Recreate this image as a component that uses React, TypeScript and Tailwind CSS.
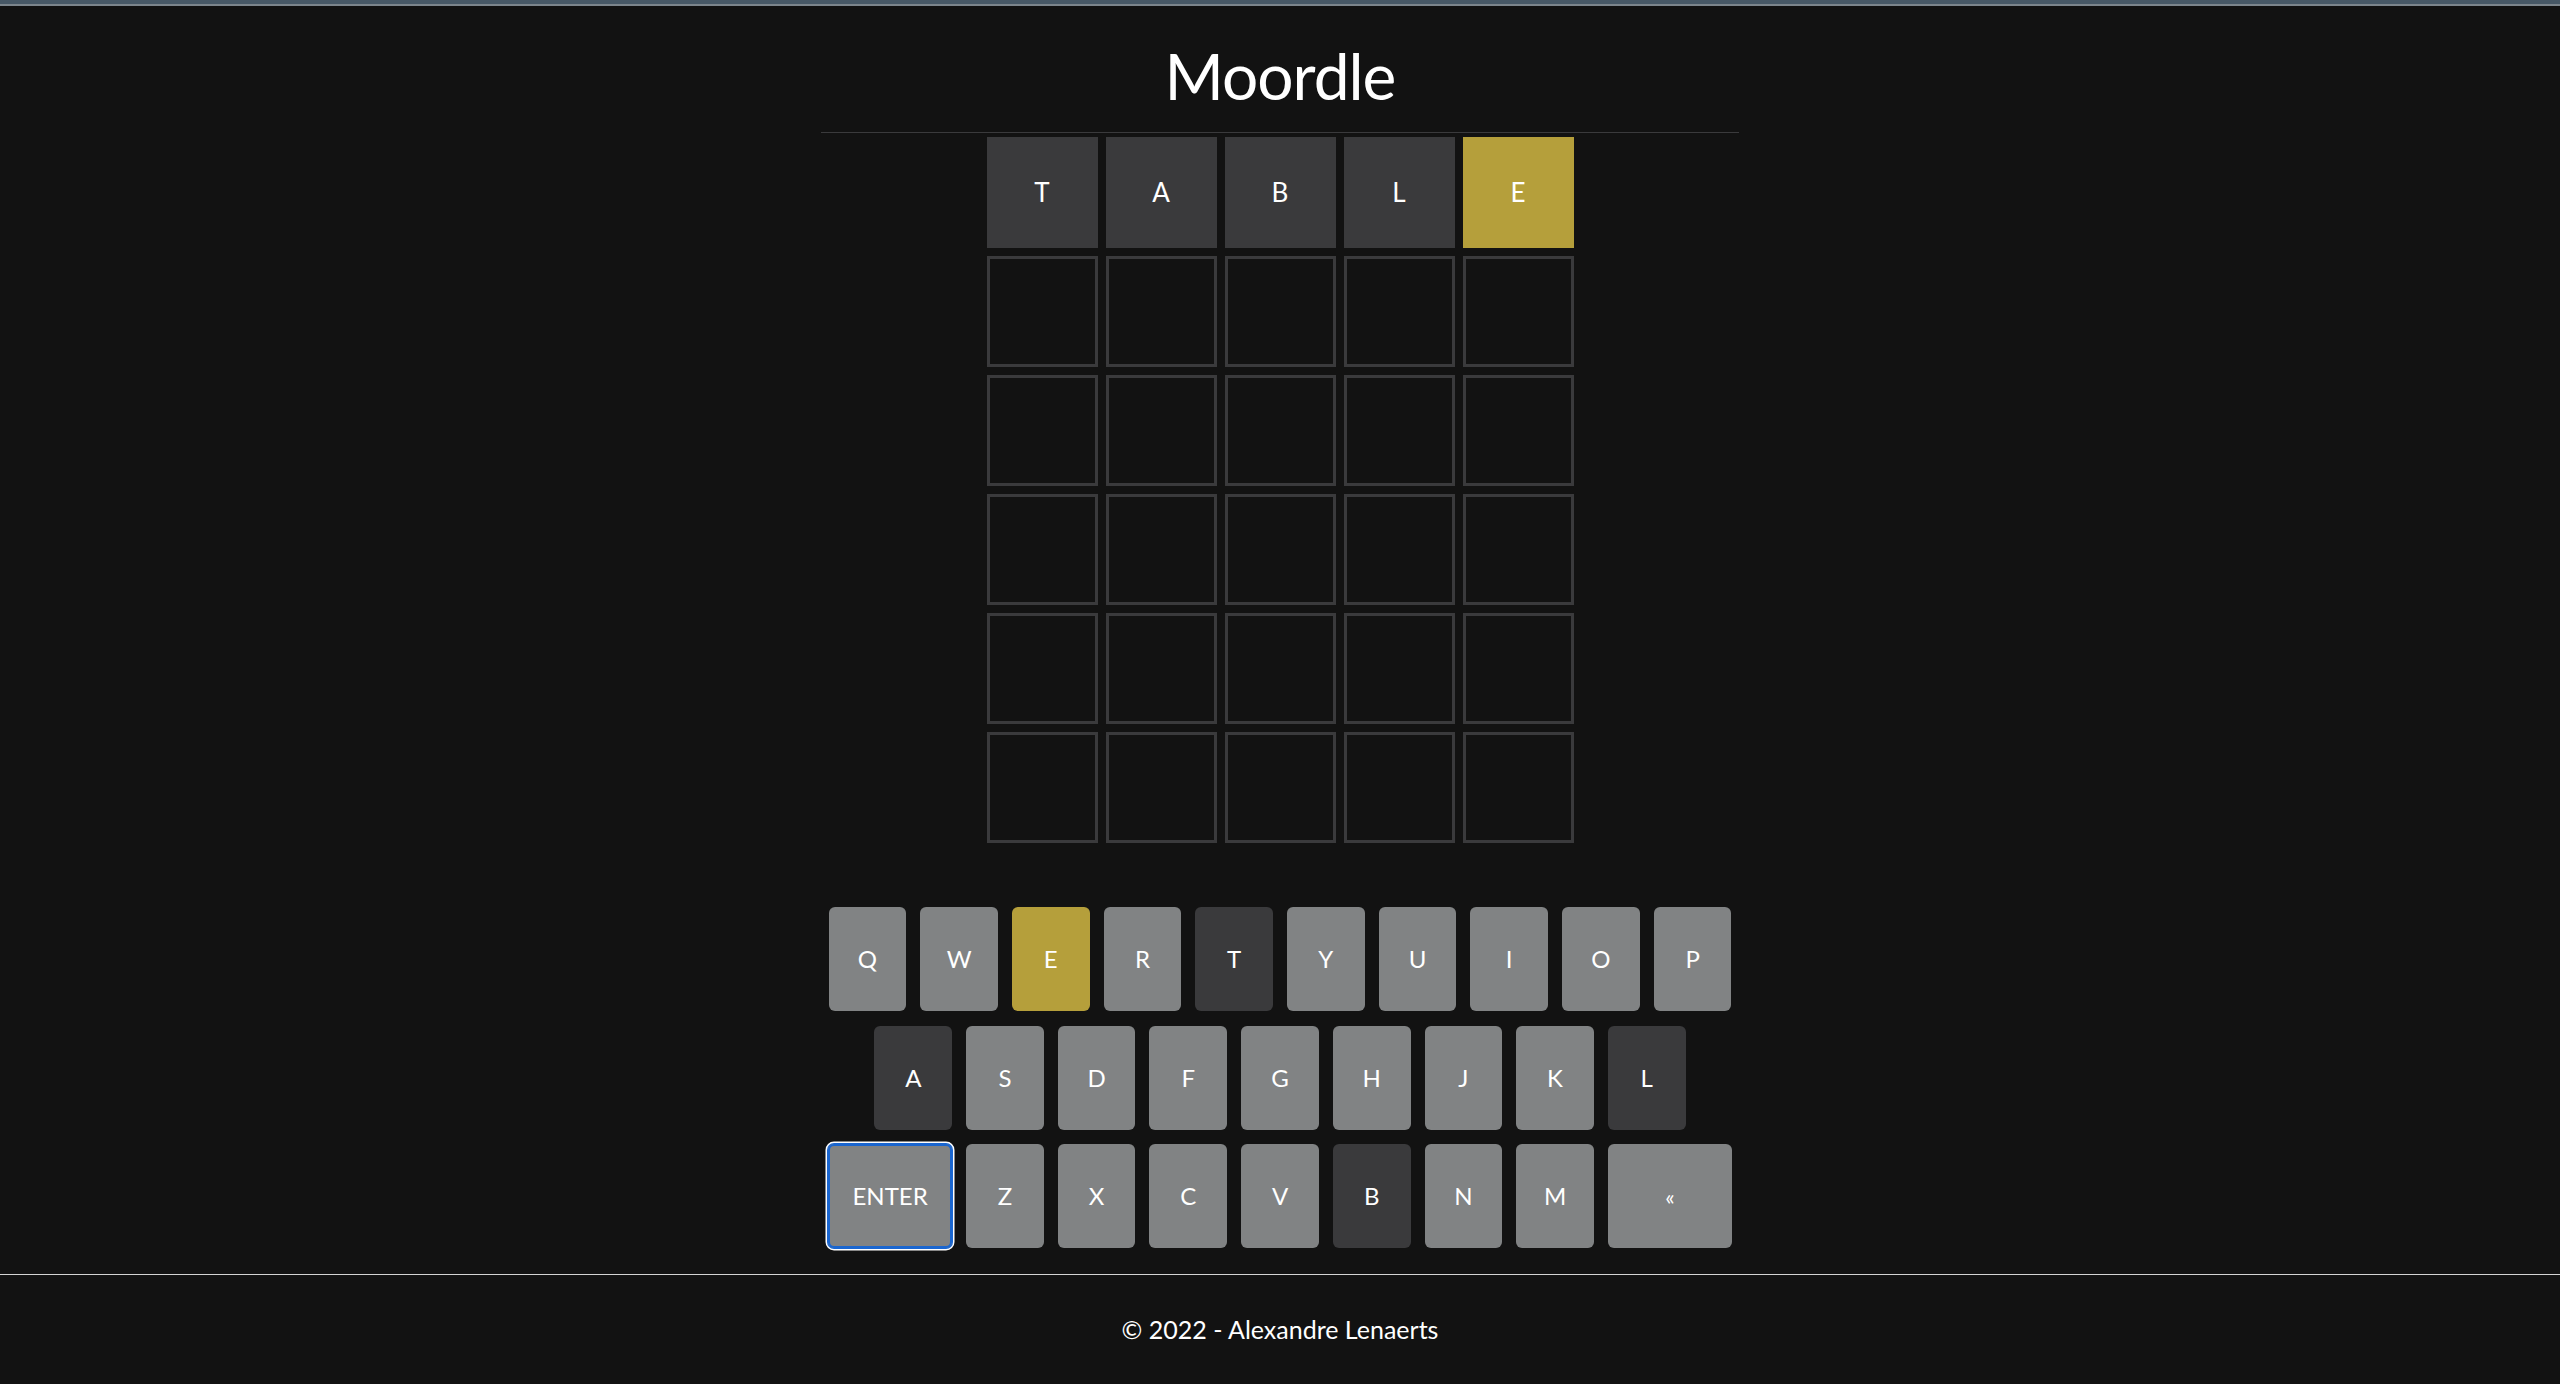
import React from "react";

type State = "absent" | "present" | "correct" | "unused";

const keyStates: Record<string, State> = {
  E: "present",
  T: "absent",
  A: "absent",
  L: "absent",
  B: "absent",
};

const rows = [
  ["Q", "W", "E", "R", "T", "Y", "U", "I", "O", "P"],
  ["A", "S", "D", "F", "G", "H", "J", "K", "L"],
];
const row3 = ["Z", "X", "C", "V", "B", "N", "M"];

function keyColor(k: string) {
  const s = keyStates[k];
  if (s === "present") return "bg-[#b59f3b]";
  if (s === "absent") return "bg-[#3a3a3c]";
  return "bg-[#818384]";
}

function Key({ label }: { label: string }) {
  return (
    <button
      className={`w-[77.7px] h-[104px] rounded-[6px] flex items-center justify-center text-white text-[24px] ${keyColor(label)}`}
    >
      {label}
    </button>
  );
}

export default function App() {
  const guess = ["T", "A", "B", "L", "E"];
  return (
    <div
      className="h-screen flex flex-col bg-[#121212] text-white overflow-hidden"
      style={{ fontFamily: "Lato, 'Noto Sans', sans-serif" }}
    >
      <div className="h-[4px] bg-[#475866]" />
      <div className="h-[2px] bg-[#7c858c]" />
      <main className="flex-1 flex flex-col items-center">
        <header className="w-[918px] pt-[38px] pb-[24px] border-b border-[#3a3a3c] flex justify-center">
          <h1 className="text-[64px] leading-[64px] font-normal tracking-[-1px]">Moordle</h1>
        </header>
        <div className="mt-[4px] flex flex-col gap-[8px]">
          <div className="flex gap-[8px]">
            {guess.map((l, i) => (
              <div
                key={i}
                className={`w-[111px] h-[111px] flex items-center justify-center text-[26px] text-white ${
                  i === 4 ? "bg-[#b59f3b]" : "bg-[#3a3a3c]"
                }`}
              >
                {l}
              </div>
            ))}
          </div>
          {[0, 1, 2, 3, 4].map((r) => (
            <div key={r} className="flex gap-[8px]">
              {[0, 1, 2, 3, 4].map((c) => (
                <div
                  key={c}
                  className="w-[111px] h-[111px] border-[3px] border-[#3a3a3c]"
                />
              ))}
            </div>
          ))}
        </div>
        <div className="mt-[64px] flex flex-col items-center">
          <div className="flex gap-[14px]">
            {rows[0].map((k) => (
              <Key key={k} label={k} />
            ))}
          </div>
          <div className="mt-[15px] flex gap-[14px]">
            {rows[1].map((k) => (
              <Key key={k} label={k} />
            ))}
          </div>
          <div className="mt-[14px] flex gap-[14px]">
            <button className="w-[124px] h-[104px] rounded-[6px] flex items-center justify-center text-white text-[24px] bg-[#818384] shadow-[inset_0_0_0_2px_#1a66d0,0_0_0_1px_#1a66d0,0_0_0_2.5px_#ffffff]">
              ENTER
            </button>
            {row3.map((k) => (
              <Key key={k} label={k} />
            ))}
            <button className="w-[124px] h-[104px] rounded-[6px] flex items-center justify-center text-white text-[22px] bg-[#818384]">
              «
            </button>
          </div>
        </div>
      </main>
      <footer className="h-[110px] border-t border-[#d4d4d4] flex items-center justify-center text-[25px] text-white">
        © 2022 - Alexandre Lenaerts
      </footer>
    </div>
  );
}
